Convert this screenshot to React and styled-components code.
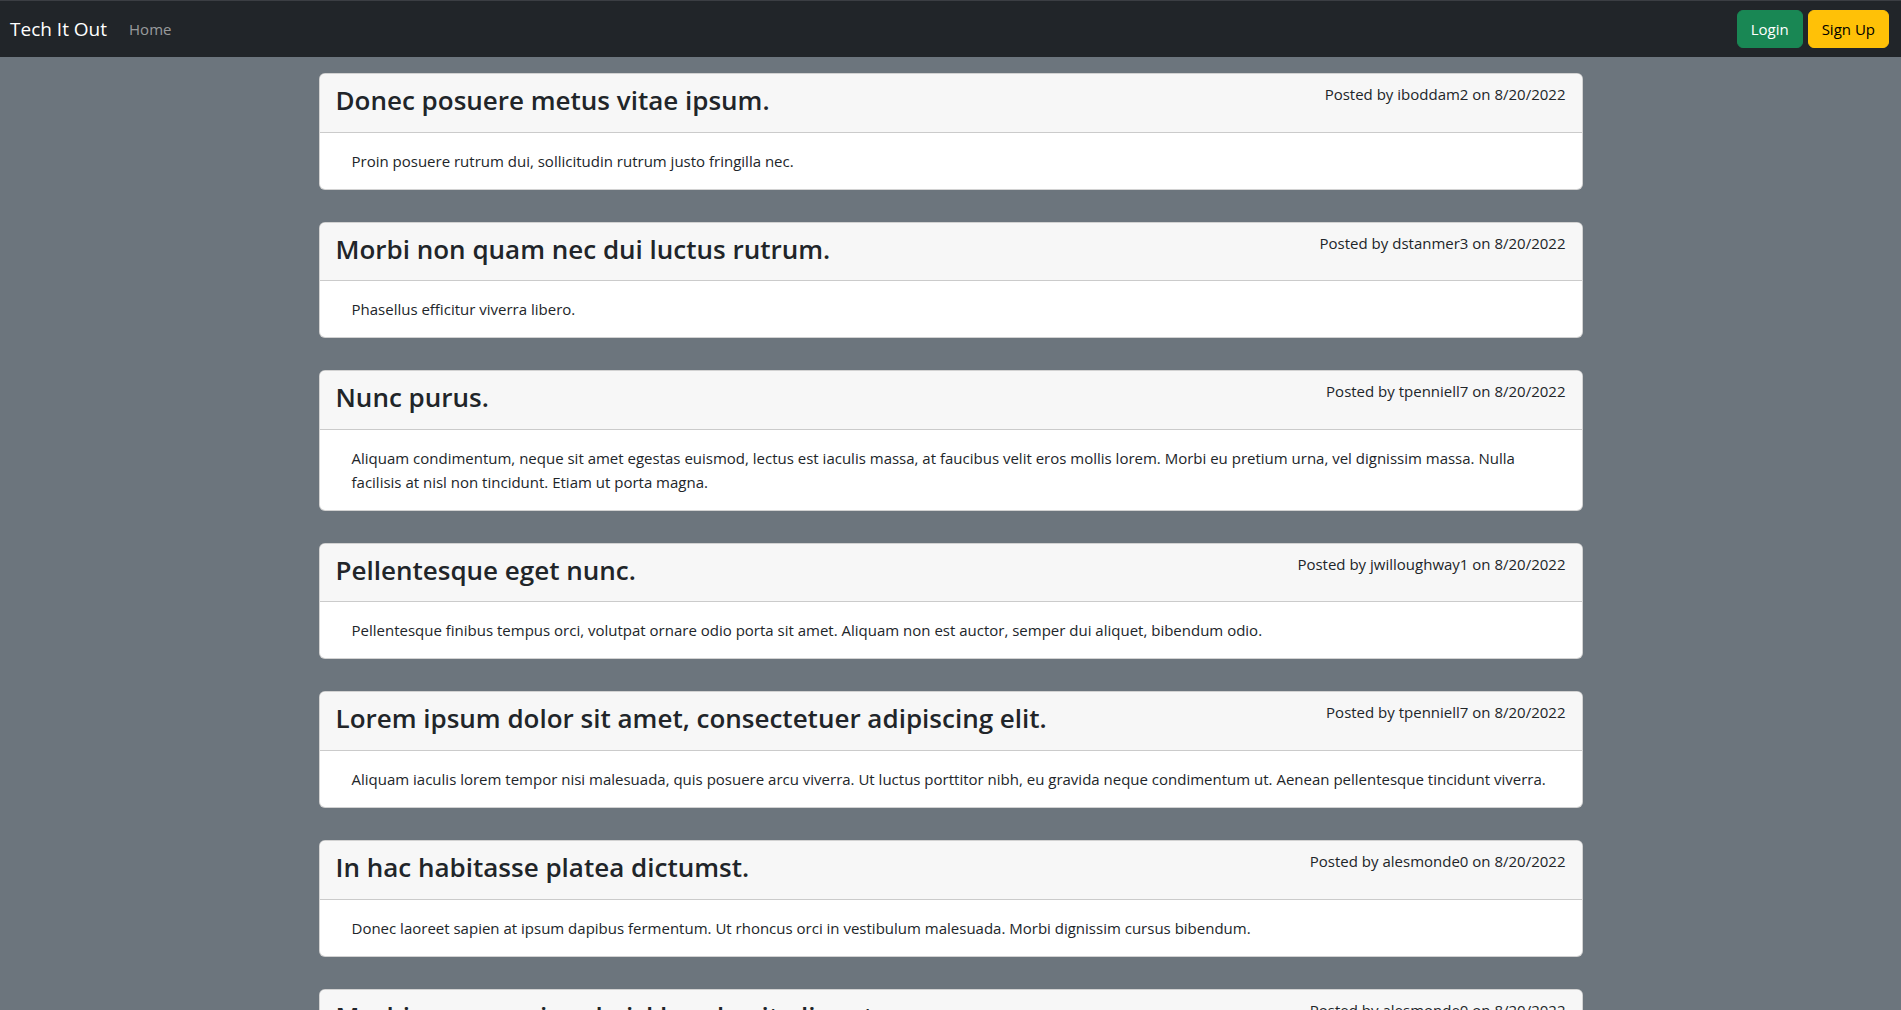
import React from 'react'
import styled, { createGlobalStyle } from 'styled-components'

const GlobalStyle = createGlobalStyle`
  * { box-sizing: border-box; }
  body {
    margin: 0;
    background: #6c757d;
    color: #212529;
    font-family: "Open Sans", "Noto Sans", "Liberation Sans", sans-serif;
    font-size: 15px;
    line-height: 24px;
  }
`

const posts = [
  {
    title: 'Donec posuere metus vitae ipsum.',
    user: 'iboddam2',
    body: 'Proin posuere rutrum dui, sollicitudin rutrum justo fringilla nec.',
  },
  {
    title: 'Morbi non quam nec dui luctus rutrum.',
    user: 'dstanmer3',
    body: 'Phasellus efficitur viverra libero.',
  },
  {
    title: 'Nunc purus.',
    user: 'tpenniell7',
    body: 'Aliquam condimentum, neque sit amet egestas euismod, lectus est iaculis massa, at faucibus velit eros mollis lorem. Morbi eu pretium urna, vel dignissim massa. Nulla facilisis at nisl non tincidunt. Etiam ut porta magna.',
  },
  {
    title: 'Pellentesque eget nunc.',
    user: 'jwilloughway1',
    body: 'Pellentesque finibus tempus orci, volutpat ornare odio porta sit amet. Aliquam non est auctor, semper dui aliquet, bibendum odio.',
  },
  {
    title: 'Lorem ipsum dolor sit amet, consectetuer adipiscing elit.',
    user: 'tpenniell7',
    body: 'Aliquam iaculis lorem tempor nisi malesuada, quis posuere arcu viverra. Ut luctus porttitor nibh, eu gravida neque condimentum ut. Aenean pellentesque tincidunt viverra.',
  },
  {
    title: 'In hac habitasse platea dictumst.',
    user: 'alesmonde0',
    body: 'Donec laoreet sapien at ipsum dapibus fermentum. Ut rhoncus orci in vestibulum malesuada. Morbi dignissim cursus bibendum.',
  },
  {
    title: 'Morbi non mauris vel nisl hendrerit aliquet.',
    user: 'alesmonde0',
    body: 'Vestibulum ante ipsum primis in faucibus orci luctus et ultrices posuere cubilia curae.',
  },
]

const Navbar = styled.nav`
  display: flex;
  align-items: center;
  justify-content: space-between;
  padding: 8px 12px;
  background: #212529;
  border-top: 1px solid #3b3e43;
`

const NavLeft = styled.div`
  display: flex;
  align-items: center;
`

const Brand = styled.a`
  color: #fff;
  font-size: 19px;
  line-height: 30px;
  padding: 5px 0;
  margin-right: 16px;
  margin-left: -2px;
  text-decoration: none;
`

const NavLink = styled.a`
  color: rgba(255, 255, 255, 0.55);
  padding: 8px;
  margin-left: -2px;
  text-decoration: none;
`

const NavRight = styled.div`
  display: flex;
  gap: 5px;
`

const Button = styled.button`
  font-family: inherit;
  font-size: 15px;
  line-height: 24px;
  padding: 6px 13px;
  border-radius: 6px;
  border: 1px solid ${(p) => (p.$variant === 'warning' ? '#ffc107' : '#198754')};
  background: ${(p) => (p.$variant === 'warning' ? '#ffc107' : '#198754')};
  color: ${(p) => (p.$variant === 'warning' ? '#000' : '#fff')};
  cursor: pointer;
`

const Feed = styled.main`
  max-width: 1264px;
  margin: 16px auto 0;
  display: flex;
  flex-direction: column;
  gap: 32px;
`

const Card = styled.article`
  background: #fff;
  border: 1px solid rgba(0, 0, 0, 0.175);
  border-radius: 6px;
  overflow: hidden;
`

const CardHeader = styled.header`
  display: flex;
  justify-content: space-between;
  align-items: flex-start;
  padding: 8px 16px;
  background: #f7f7f7;
  border-bottom: 1px solid rgba(0, 0, 0, 0.175);
`

const Title = styled.h3`
  margin: 0 0 6px;
  padding-top: 2px;
  font-size: 26px;
  font-weight: 600;
  line-height: 33.6px;
`

const Meta = styled.span`
  font-size: 15px;
  line-height: 24px;
`

const CardBody = styled.div`
  padding: 16px;
`

const Text = styled.p`
  margin: 0;
  padding-left: 16px;
`

export default function App() {
  return (
    <>
      <GlobalStyle />
      <Navbar>
        <NavLeft>
          <Brand href="#">Tech It Out</Brand>
          <NavLink href="#">Home</NavLink>
        </NavLeft>
        <NavRight>
          <Button $variant="success">Login</Button>
          <Button $variant="warning">Sign Up</Button>
        </NavRight>
      </Navbar>
      <Feed>
        {posts.map((post, i) => (
          <Card key={i}>
            <CardHeader>
              <Title>{post.title}</Title>
              <Meta>Posted by {post.user} on 8/20/2022</Meta>
            </CardHeader>
            <CardBody>
              <Text>{post.body}</Text>
            </CardBody>
          </Card>
        ))}
      </Feed>
    </>
  )
}
